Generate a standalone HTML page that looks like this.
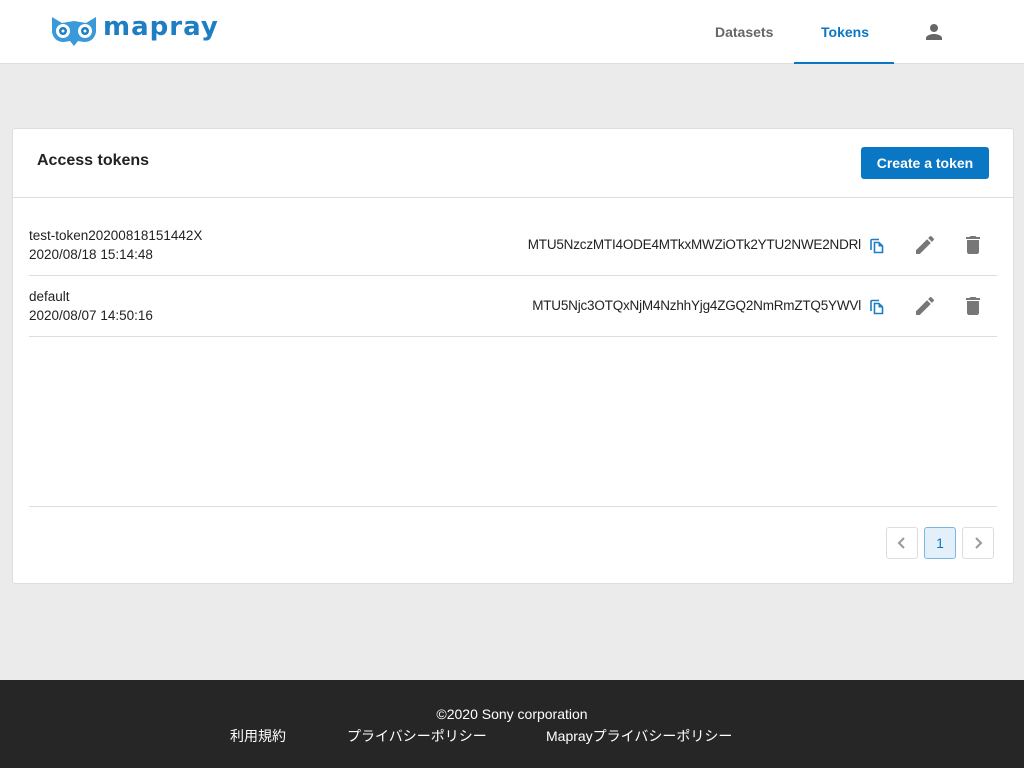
<!DOCTYPE html>
<html><head><meta charset="utf-8"><style>
*{box-sizing:border-box;margin:0;padding:0}
body{width:1024px;height:768px;background:#ebebeb;font-family:"Liberation Sans","Noto Sans CJK JP",sans-serif;position:relative;overflow:hidden;color:#222}
.hdr{position:absolute;left:0;top:0;width:1024px;height:64px;background:#fff;border-bottom:1px solid #ddd}
.nav{position:absolute;top:24px;font-size:14px;font-weight:bold;color:#666}
.tab{position:absolute;left:794px;top:62px;width:100px;height:2px;background:#0a77c4}
.card{position:absolute;left:12px;top:128px;width:1002px;height:456px;background:#fff;border:1px solid #ddd;border-radius:3px}
.title{position:absolute;left:24px;top:23px;font-size:16px;font-weight:bold}
.btn{position:absolute;left:848px;top:18px;width:128px;height:32px;background:#0a77c4;color:#fff;border-radius:3px;font-size:14px;font-weight:bold;text-align:center;line-height:33px}
.sep{position:absolute;left:0;top:68px;width:1000px;height:1px;background:#ddd}
.row{position:absolute;left:16px;width:968px;height:61px;border-bottom:1px solid #ddd;font-size:13.5px}
.n{position:absolute;left:0;top:11px;line-height:19px}
.tok{position:absolute;right:136px;top:21px;letter-spacing:-0.2px}
.ic{position:absolute;top:18px}
.pg{position:absolute;top:398px;width:32px;height:32px;border:1px solid #ddd;border-radius:3px;text-align:center;line-height:30px;color:#999;font-size:14px}
.pg svg{margin-top:8px}
.ftr{position:absolute;left:0;top:680px;width:1024px;height:88px;background:#262626;color:#fff;font-size:14px}
</style></head><body>
<div class="hdr">
<svg style="position:absolute;left:50px;top:14px" width="48" height="32" viewBox="0 0 48 32"><path d="M2 3 L12 9 L24 7 L36 9 L46 3 L46 18 Q44 28 34 28 L28 27 L24 32 L20 27 L14 28 Q4 28 2 18Z" fill="#3a9ad9"/><circle cx="13" cy="17" r="7" fill="#fff"/><circle cx="35" cy="17" r="7" fill="#fff"/><circle cx="13" cy="17" r="4" fill="#1d7ec4"/><circle cx="35" cy="17" r="4" fill="#1d7ec4"/><circle cx="13" cy="17" r="1.5" fill="#fff"/><circle cx="35" cy="17" r="1.5" fill="#fff"/></svg>
<div style="position:absolute;left:103px;top:12px;font-size:26px;font-weight:bold;color:#1d7ec4;letter-spacing:1px;font-family:'DejaVu Sans',sans-serif">mapray</div>
<div class="nav" style="left:715px">Datasets</div>
<div class="nav" style="left:821px;color:#0a77c4">Tokens</div>
<svg style="position:absolute;left:922px;top:20px" width="24" height="24" viewBox="0 0 24 24"><path fill="#666" d="M12 12c2.2 0 4-1.8 4-4s-1.8-4-4-4-4 1.8-4 4 1.8 4 4 4zm0 2c-2.7 0-8 1.3-8 4v2h16v-2c0-2.7-5.3-4-8-4z"/></svg>
<div class="tab"></div>
</div>
<div class="card">
<div class="title">Access tokens</div>
<div class="btn">Create a token</div>
<div class="sep"></div>
<div class="row" style="top:86px"><div class="n">test-token20200818151442X<br>2020/08/18 15:14:48</div><div class="tok" style="top:22px">MTU5NzczMTI4ODE4MTkxMWZiOTk2YTU2NWE2NDRl</div>
<svg class="ic" style="left:839px;top:22px" width="18" height="18" viewBox="0 0 18 18"><path fill="none" stroke="#1d7ec4" stroke-width="1.6" d="M3 13V3.5Q3 2.5 4 2.5H11"/><path fill="none" stroke="#1d7ec4" stroke-width="1.6" d="M6.5 5.5H11L14.5 9V15.5H6.5Z"/><path fill="#1d7ec4" d="M10.5 5.5V9.5H14.5Z"/></svg>
<svg class="ic" style="left:884px" width="24" height="24" viewBox="0 0 24 24"><path fill="#777" d="M3 17.25V21h3.75L17.81 9.94l-3.75-3.75L3 17.25zM20.71 7.04a1 1 0 000-1.41l-2.34-2.34a1 1 0 00-1.41 0l-1.83 1.83 3.75 3.75 1.83-1.83z"/></svg>
<svg class="ic" style="left:932px" width="24" height="24" viewBox="0 0 24 24"><path fill="#777" d="M6 19c0 1.1.9 2 2 2h8c1.1 0 2-.9 2-2V7H6v12zM19 4h-3.5l-1-1h-5l-1 1H5v2h14V4z"/></svg></div>
<div class="row" style="top:147px"><div class="n">default<br>2020/08/07 14:50:16</div><div class="tok" style="top:22px">MTU5Njc3OTQxNjM4NzhhYjg4ZGQ2NmRmZTQ5YWVl</div>
<svg class="ic" style="left:839px;top:22px" width="18" height="18" viewBox="0 0 18 18"><path fill="none" stroke="#1d7ec4" stroke-width="1.6" d="M3 13V3.5Q3 2.5 4 2.5H11"/><path fill="none" stroke="#1d7ec4" stroke-width="1.6" d="M6.5 5.5H11L14.5 9V15.5H6.5Z"/><path fill="#1d7ec4" d="M10.5 5.5V9.5H14.5Z"/></svg>
<svg class="ic" style="left:884px" width="24" height="24" viewBox="0 0 24 24"><path fill="#777" d="M3 17.25V21h3.75L17.81 9.94l-3.75-3.75L3 17.25zM20.71 7.04a1 1 0 000-1.41l-2.34-2.34a1 1 0 00-1.41 0l-1.83 1.83 3.75 3.75 1.83-1.83z"/></svg>
<svg class="ic" style="left:932px" width="24" height="24" viewBox="0 0 24 24"><path fill="#777" d="M6 19c0 1.1.9 2 2 2h8c1.1 0 2-.9 2-2V7H6v12zM19 4h-3.5l-1-1h-5l-1 1H5v2h14V4z"/></svg></div>
<div style="position:absolute;left:16px;top:377px;width:968px;height:1px;background:#ddd"></div>
<div class="pg" style="left:873px"><svg width="14" height="14" viewBox="0 0 14 14"><path d="M9 2L4 7l5 5" fill="none" stroke="#999" stroke-width="2"/></svg></div>
<div class="pg" style="left:911px;background:#e3f0fa;border-color:#7ab7e3;color:#0a77c4">1</div>
<div class="pg" style="left:949px"><svg width="14" height="14" viewBox="0 0 14 14"><path d="M5 2l5 5-5 5" fill="none" stroke="#999" stroke-width="2"/></svg></div>
</div>
<div class="ftr">
<div style="position:absolute;left:0;width:1024px;top:26px;text-align:center">©2020 Sony corporation</div>
<div style="position:absolute;left:230px;top:46px">利用規約</div>
<div style="position:absolute;left:347px;top:46px">プライバシーポリシー</div>
<div style="position:absolute;left:546px;top:46px">Maprayプライバシーポリシー</div>
</div>
</body></html>
